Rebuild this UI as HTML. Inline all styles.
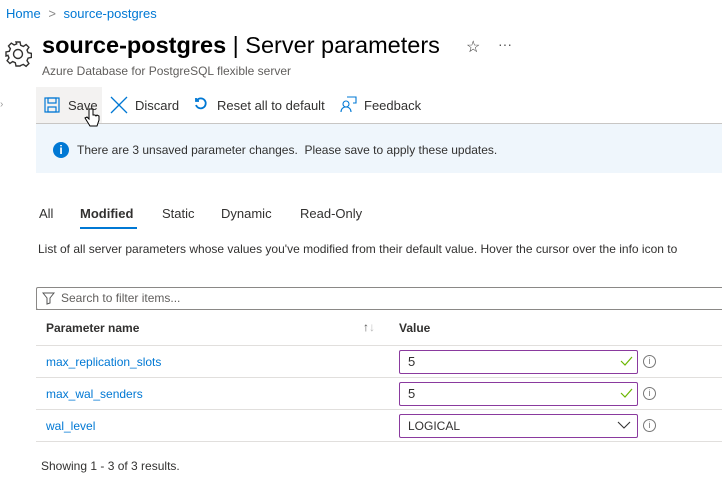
<!DOCTYPE html>
<html><head><style>
body{margin:0;width:722px;height:498px;background:#fff;font-family:"Liberation Sans",sans-serif;color:#323130;position:relative;overflow:hidden}
.a{position:absolute;white-space:nowrap}
.link{color:#0078d4}
.inp{position:absolute;left:399px;width:229px;height:22px;border:1px solid #8a3a9e;border-radius:2px;font-size:13px;line-height:22px;padding-left:8px;box-sizing:content-box}
.line{position:absolute;left:36px;right:0;height:1px;background:#e1dfdd}
.ic{position:absolute;left:643px;width:11px;height:11px;border:1px solid #777;border-radius:50%;font-size:9px;line-height:11px;text-align:center;color:#777}
</style></head><body>
<div class="a" style="left:6px;top:6px;font-size:13px"><span class="link">Home</span> <span style="color:#888;margin:0 4px">&gt;</span> <span class="link">source-postgres</span></div>
<svg class="a" style="left:4px;top:40px" width="28" height="28" viewBox="0 0 28 28" fill="none" stroke="#323130" stroke-width="1.4"><path d="M12 2h4l.7 3.3 2.6 1.1 2.8-1.9 2.8 2.8-1.9 2.8 1.1 2.6 3.3.7v4l-3.3.7-1.1 2.6 1.9 2.8-2.8 2.8-2.8-1.9-2.6 1.1L16 26h-4l-.7-3.3-2.6-1.1-2.8 1.9-2.8-2.8 1.9-2.8-1.1-2.6L2 16v-4l3.3-.7 1.1-2.6-1.9-2.8 2.8-2.8 2.8 1.9 2.6-1.1z"/><circle cx="14" cy="14" r="4.5"/></svg>
<div class="a" style="left:42px;top:32px;font-size:23.5px;color:#000"><b>source-postgres</b> | Server parameters</div>
<div class="a" style="left:466px;top:37px;font-size:16px">☆</div>
<div class="a" style="left:498px;top:36px;font-size:14px;color:#555">···</div>
<div class="a" style="left:42px;top:64px;font-size:12px;color:#605e5c">Azure Database for PostgreSQL flexible server</div>
<div class="a" style="left:0;top:99px;font-size:10px;color:#999">›</div>
<div class="a" style="left:36px;top:87px;width:66px;height:36px;background:#f3f2f1"></div>
<svg class="a" style="left:44px;top:97px" width="16" height="16" viewBox="0 0 16 16" fill="none" stroke="#0078d4" stroke-width="1.2"><rect x="1" y="1" width="14" height="14"/><rect x="4" y="1" width="8" height="5"/><rect x="4" y="10" width="8" height="5"/></svg>
<div class="a" style="left:68px;top:98px;font-size:13px">Save</div>
<svg class="a" style="left:110px;top:96px" width="18" height="18" viewBox="0 0 18 18" stroke="#0078d4" stroke-width="1.3"><path d="M1 1l16 16M17 1L1 17"/></svg>
<div class="a" style="left:135px;top:98px;font-size:13px">Discard</div>
<svg class="a" style="left:194px;top:97px" width="14" height="14" viewBox="0 0 14 14" fill="none" stroke="#0078d4" stroke-width="1.8"><path d="M3 3a5 5 0 1 1-1 5"/><path d="M2 1v3h3"/></svg>
<div class="a" style="left:217px;top:98px;font-size:13px">Reset all to default</div>
<svg class="a" style="left:340px;top:96px" width="17" height="17" viewBox="0 0 17 17" fill="none" stroke="#0078d4" stroke-width="1.1"><circle cx="6" cy="8" r="3"/><path d="M1 16c0-3 2-5 5-5s5 2 5 5M7 1h9v6h-3"/></svg>
<div class="a" style="left:364px;top:98px;font-size:13px">Feedback</div>
<div class="a" style="left:36px;top:123px;right:0;height:1px;background:#c8c6c4"></div>
<div class="a" style="left:36px;top:124px;right:0;height:49px;background:#eff6fc"></div>
<div class="a" style="left:53px;top:142px;width:16px;height:16px;border-radius:50%;background:#0078d4;color:#fff;font-size:12px;font-weight:bold;text-align:center;line-height:16px">i</div>
<div class="a" style="left:77px;top:143px;font-size:12px">There are 3 unsaved parameter changes.&nbsp; Please save to apply these updates.</div>
<div class="a" style="left:39px;top:206px;font-size:13px">All</div>
<div class="a" style="left:80px;top:206px;font-size:13px;font-weight:bold">Modified</div>
<div class="a" style="left:80px;top:227px;width:57px;height:2px;background:#0078d4"></div>
<div class="a" style="left:162px;top:206px;font-size:13px">Static</div>
<div class="a" style="left:221px;top:206px;font-size:13px">Dynamic</div>
<div class="a" style="left:300px;top:206px;font-size:13px">Read-Only</div>
<div class="a" style="left:38px;top:242px;font-size:12px">List of all server parameters whose values you've modified from their default value. Hover the cursor over the info icon to</div>
<div class="a" style="left:36px;top:287px;right:-2px;height:21px;border:1px solid #8a8886;border-radius:2px"></div>
<svg class="a" style="left:42px;top:292px" width="13" height="13" viewBox="0 0 13 13" fill="none" stroke="#555"><path d="M1 1h11L8 6v5l-3 1V6z"/></svg>
<div class="a" style="left:61px;top:291px;font-size:12px;color:#605e5c">Search to filter items...</div>
<div class="line" style="top:309px;background:#8a8886"></div>
<div class="a" style="left:46px;top:321px;font-size:12px;font-weight:bold">Parameter name</div>
<div class="a" style="left:363px;top:320px;font-size:12px;color:#555">↑<span style="color:#bbb">↓</span></div>
<div class="a" style="left:399px;top:321px;font-size:12px;font-weight:bold">Value</div>
<div class="line" style="top:345px"></div>
<div class="line" style="top:377px"></div>
<div class="line" style="top:409px"></div>
<div class="line" style="top:441px"></div>
<div class="a link" style="left:46px;top:355px;font-size:12px">max_replication_slots</div>
<div class="a link" style="left:46px;top:387px;font-size:12px">max_wal_senders</div>
<div class="a link" style="left:46px;top:419px;font-size:12px">wal_level</div>
<div class="inp" style="top:350px">5</div>
<div class="inp" style="top:382px">5</div>
<div class="inp" style="top:414px;font-size:12px">LOGICAL</div>
<svg class="a" style="left:620px;top:356px" width="13" height="10" viewBox="0 0 13 10" fill="none" stroke="#6bb700" stroke-width="1.2"><path d="M1 5l4 4 7-8"/></svg>
<svg class="a" style="left:620px;top:388px" width="13" height="10" viewBox="0 0 13 10" fill="none" stroke="#6bb700" stroke-width="1.2"><path d="M1 5l4 4 7-8"/></svg>
<svg class="a" style="left:617px;top:421px" width="14" height="9" viewBox="0 0 14 9" fill="none" stroke="#333" stroke-width="1.1"><path d="M1 1l6 6 6-6"/></svg>
<div class="ic" style="top:355px;left:643px">i</div>
<div class="ic" style="top:387px;left:643px">i</div>
<div class="ic" style="top:419px;left:643px">i</div>
<div class="a" style="left:41px;top:459px;font-size:12px">Showing 1 - 3 of 3 results.</div>
<svg class="a" style="left:84px;top:108px" width="16" height="20" viewBox="0 0 16 20"><path d="M5 1v10l-2-2-2 1 5 8h7l2-6v-4l-2-1-1 1-1-1-2 0V1z" fill="#fff" stroke="#000"/></svg>
</body></html>
